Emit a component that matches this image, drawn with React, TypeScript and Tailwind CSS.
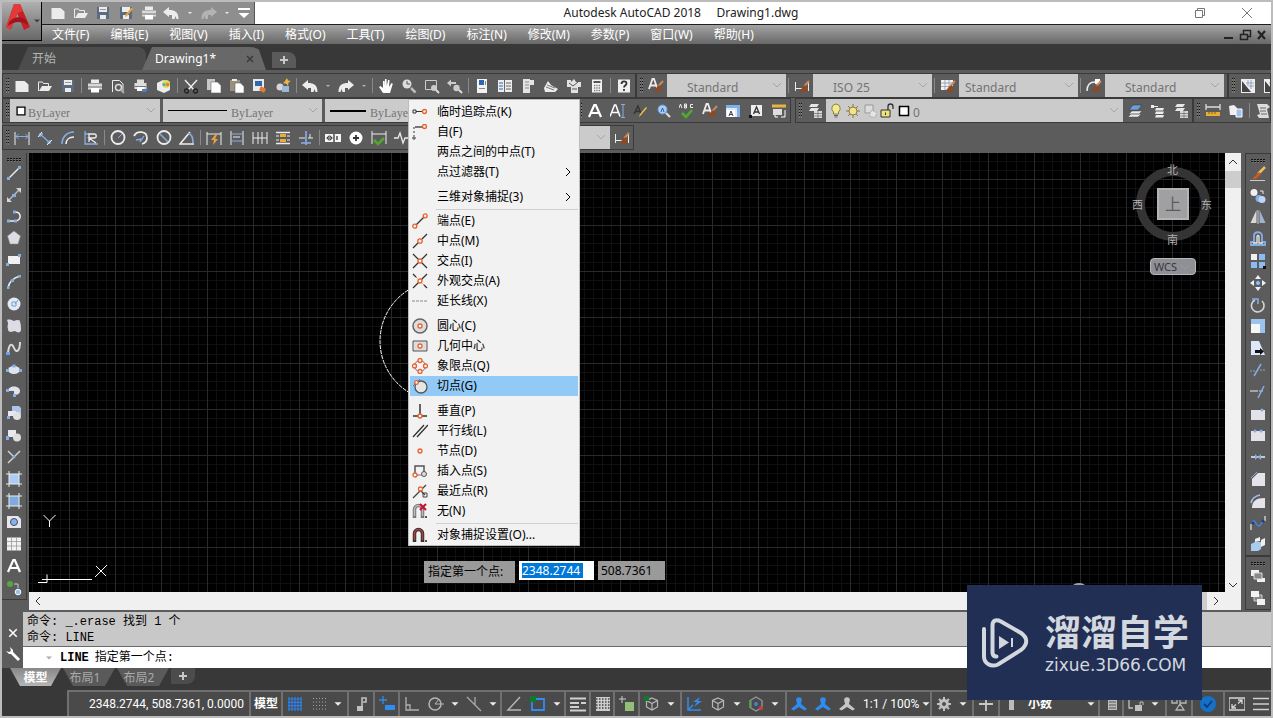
import type { ReactNode } from 'react';

const W = '#ececec';
const B = '#86aee6';
const O = '#e8622c';

const page = <path d="M1.500 3h9L14.500 6.500V14h-13z" fill={W} />;

const brush = (
  <>
    <path d="M15 3l-4.500 5" stroke="#c98a5a" strokeWidth="2" />
    <path d="M12 7.500c-3-.5-3.500 3-6 4.500 3 4 8 2 8-2z" fill="#8c4a26" />
  </>
);

const dimBar = <path d="M1.500 4v9M14.500 4v9M2 10.500h12" stroke={W} />;

const cube = <path d="M8 2l5.500 2.500v6.500L8 14l-5.500-3V4.500zM2.500 4.500L8 7.500l5.500-3M8 7.500V14" stroke="#b8b8b8" strokeWidth="1.200" />;

const person = (c: string) => (
  <>
    <path d="M8 2L5.500 5l.5 3L0 13l2.500 1.500L8 11l5.500 3.500L16 13l-6-5 .5-3z" fill={c} />
    <circle cx="8" cy="4" r="2.800" fill={c} />
  </>
);

const magnet = (c: string, inner: string) => (
  <>
    <path d="M2.500 15V6.500a4 4 0 0 1 8 0V15" stroke={c} strokeWidth="3.500" />
    <path d="M2.500 13V6.500a4 4 0 0 1 8 0V13" stroke={inner} strokeWidth="1.500" />
    <path d="M13 13h2v2h-2z" fill="#555" />
  </>
);

const icons: Record<string, ReactNode> = {
  new: page,
  open: (
    <>
      <path d="M1.500 13V4h4l1 1.500h5V8" stroke={W} />
      <path d="M2 13l3-5h10l-3 5z" fill={W} />
    </>
  ),
  save: (
    <>
      <path d="M2 2h12v12H2z" fill="#5c6b80" />
      <path d="M4 2h8v5H4zM5 10h6v4H5z" fill={W} />
      <path d="M5 4.500h6" stroke="#999" />
    </>
  ),
  saveAs: (
    <>
      <path d="M2 2h12v12H2z" fill="#5c6b80" />
      <path d="M4 2h8v5H4zM5 10h6v4H5z" fill={W} />
      <path d="M15 4l-6 7-2 1 .5-2.500 6-7z" fill="#e3a640" />
    </>
  ),
  print: (
    <>
      <path d="M4 1.500h8V5H4z" fill={W} />
      <path d="M1 5.500h14v6H1z" fill="#d8d8d8" />
      <path d="M1 9h14" stroke="#777" />
      <path d="M4 10h8v4.500H4z" fill="#fff" />
    </>
  ),
  undo: <path d="M0 7l6-5v3c6 0 9.500 2 9.500 9h-2l-1-3-1 3H9V10H6v2z" fill={W} />,
  redo: <path d="M16 7l-6-5v3C4 5 .5 7 .5 14h2l1-3 1 3H7v-4h3v2z" fill={W} />,
  down: <path d="M4 6h8l-4 4z" fill={W} />,
  downBar: <path d="M2 3h12v2H2zM2.500 8h11L8 13z" fill="#fff" />,
  preview: (
    <>
      <path d="M2.500 14V2.500h7L13 6v8" stroke={W} />
      <circle cx="8.500" cy="9.500" r="3" stroke="#ddd" strokeWidth="1.500" />
      <path d="M11 12l3 3" stroke="#aaa" strokeWidth="2" />
    </>
  ),
  publish: (
    <>
      <path d="M4 1.500h7V5H4zM1.500 5h12v6h-12z" fill="#ddd" />
      <path d="M4 9h7v4H4z" fill="#fff" />
      <path d="M2 8.500h11" stroke="#777" />
      <path d="M9 11h6l-2 3H9z" fill="#4a7fc4" />
    </>
  ),
  sheets: (
    <>
      <path d="M1 5l6-3 7 2v8l-6 3-7-3z" fill={W} />
      <circle cx="10" cy="6" r="4" fill="#d7e25c" />
      <circle cx="11.500" cy="6.500" r="2" fill="#e08a3c" />
      <circle cx="8" cy="6.500" r="1.500" fill="#5a9be0" />
    </>
  ),
  cut: (
    <>
      <path d="M2 2l9 10M14 2L5 12" stroke={W} strokeWidth="1.500" />
      <circle cx="3.500" cy="13" r="2" stroke="#222" strokeWidth="1.300" />
      <circle cx="12.500" cy="13" r="2" stroke="#222" strokeWidth="1.300" />
    </>
  ),
  copy: (
    <>
      <path d="M1 1h8v11H1z" fill="#c8c8c8" />
      <path d="M5 4h6.500L15 7.500V15H5z" fill="#fff" stroke="#666" strokeWidth=".6" />
    </>
  ),
  paste: (
    <>
      <path d="M1 2h10v11H1z" fill="#9a9080" />
      <path d="M3 1h5v2H3z" fill={W} />
      <path d="M6 5h5.500L15 8.500V15H6z" fill="#fff" stroke="#666" strokeWidth=".6" />
    </>
  ),
  match: (
    <>
      <path d="M1 1h11v12H1z" fill="#e9e9e9" />
      <path d="M3 3h7v5H3z" fill="#2f66b0" />
      <path d="M9 8l5 3-2 4-5-3z" fill="#e07b34" />
    </>
  ),
  blockEdit: (
    <>
      <circle cx="5" cy="9" r="3.500" fill="#d6d6d6" />
      <path d="M7 8h7v6H7z" fill="#9bb8d8" />
      <path d="M12 0l1 2.500 3 .5-2.500 1.500L13 8l-2-2.500H8L10 3z" fill="#f0b548" />
    </>
  ),
  pan: <path d="M5 15L1 9l1.500-1L5 10V3h1.500v5l.5-7h1.500l.3 7L10 2h1.500L11 9l2.500-4 1.300.7L12 15z" fill="#fff" />,
  zoom: (
    <>
      <circle cx="6" cy="6" r="4.500" fill="#ddd" />
      <path d="M6 3v3h3" stroke="#555" />
      <path d="M10 10l4.500 4.500" stroke="#bbb" strokeWidth="2.500" />
    </>
  ),
  zoomWin: (
    <>
      <path d="M1.500 2.500h11v9h-11z" stroke="#ccc" />
      <circle cx="10" cy="10" r="3" fill="#ccc" />
      <path d="M12 12l3 3" stroke="#ddd" strokeWidth="2" />
    </>
  ),
  zoomPrev: (
    <>
      <path d="M0 5l4-3.500V4h5v2H4v2.500z" fill="#ccc" />
      <circle cx="9.500" cy="10" r="3.200" fill="#ccc" />
      <path d="M12 12l3 3" stroke="#ddd" strokeWidth="2" />
    </>
  ),
  props: (
    <>
      <path d="M3 1h10v14H3z" fill="#f2f2f2" />
      <path d="M5 2h5v5H5z" fill="#2f66b0" />
      <path d="M11 3h1v4h-1zM5 10h6v1H5z" fill="#888" />
    </>
  ),
  center: (
    <>
      <path d="M1 2h14v12H1z" fill="#ededed" />
      <path d="M2 4h4v2H2zM2 7h4v2H2zM2 10h4v2H2z" fill="#8aa9cf" />
      <path d="M7.500 2v12M9 5h5M9 8h5M9 11h5" stroke="#666" />
    </>
  ),
  palette: (
    <>
      <path d="M3 1h7v14H3zM10 2h4v5h-4z" fill="#e4e4e4" />
      <path d="M5 4h4M5 7h4M5 10h4" stroke="#888" />
    </>
  ),
  sheetSet: (
    <>
      <path d="M1 10l4-7 3 4 7 4-3 3H2z" fill={W} />
      <path d="M3 9l8 3M4 7l8 3" stroke="#777" />
    </>
  ),
  markup: (
    <>
      <path d="M1 2h4v2l3-3 2 3h5v5h-3v6H5V9H1z" fill="#e2e2e2" />
      <path d="M3 5l4 3 5-4M6 11h5" stroke="#555" />
    </>
  ),
  calc: (
    <>
      <path d="M3 1.500h10v13H3z" fill="#f2f2f2" />
      <path d="M4.500 3h7v2h-7z" fill="#555" />
      <path d="M5 7.500h6.500M5 10h6.500M5 12.500h6.500" stroke="#777" strokeWidth="1.300" strokeDasharray="1.300 1" />
    </>
  ),
  help: (
    <>
      <path d="M2 1.500h12v13H2z" fill="#f0f0f0" />
      <path d="M5.500 6c0-3.500 5-3.500 5-.5 0 2-2.500 2-2.500 4M8 11v2" stroke="#333" strokeWidth="1.800" />
    </>
  ),
  textStyle: (
    <>
      <path d="M1 11L4.500 1h1.500L9.500 11M2.500 7.500h5.500" stroke={W} strokeWidth="1.800" />
      {brush}
    </>
  ),
  dimStyle: (
    <>
      {dimBar}
      {brush}
    </>
  ),
  tableStyle: (
    <>
      <path d="M1 2h12v10H1z" fill="#f2f2f2" />
      <path d="M1 5h12M1 8.500h12M5 2v10M9 2v10" stroke="#8a9bb5" strokeWidth=".8" />
      {brush}
    </>
  ),
  leaderStyle: (
    <>
      <path d="M1 13c0-5 2-9 8-9" stroke={W} strokeWidth="1.500" />
      <path d="M9 1h5v5H9z" fill="#fff" />
      {brush}
    </>
  ),
  ruler: (
    <>
      <path d="M1 1h14v14H1z" fill="#eee" />
      <path d="M2 3v11h9z" fill="#444" />
      <path d="M8 2v6M11 2v9M6 5h8M9 8h5" stroke="#7a95bb" strokeWidth=".8" />
    </>
  ),
  letterA: <path d="M2 14L7.300 2h1.500L14 14M4.500 10h7" stroke="#fff" strokeWidth="2.200" />,
  mtext: (
    <>
      <path d="M0 13.500L4.500 2h1.300L10 13.500M2 9.500h6" stroke="#fff" strokeWidth="1.500" />
      <path d="M11 1.500h4M13 1.500v13M11 14.500h4" stroke={B} />
    </>
  ),
  editText: (
    <>
      <path d="M1 11L5 3l3 8M3 8.500h4" stroke="#333" strokeWidth="1.500" />
      <path d="M14 5l-6 7-2 2 1-3 6-7z" fill="#f0c84a" />
    </>
  ),
  findText: (
    <>
      <circle cx="6.500" cy="6.500" r="4.500" fill="#a9cdf5" stroke="#6d9ddb" />
      <path d="M5 9l1.500-4L8 9" stroke="#2c5ea8" />
      <path d="M10 10l4 4" stroke="#ddd" strokeWidth="2.200" />
    </>
  ),
  spell: (
    <>
      <path d="M0 5l1.500-4L3 5M5.500 1v4h2V3H6h1.500V1zM14 1.500h-2.500v3H14" stroke={W} />
      <path d="M3 10l4 4 6-7" stroke="#4cae2c" strokeWidth="2.500" />
    </>
  ),
  scaleText: (
    <>
      <path d="M1 2h14v12H1z" fill="#dcebfb" />
      <path d="M1 2h14v12h-3V5H1z" fill="#7fb0ea" />
      <path d="M2 7h8v7H2z" fill="#fff" />
      <path d="M4 13l2-5 2 5M4.500 11.500h3" stroke="#444" />
    </>
  ),
  justify: (
    <>
      <path d="M3 2h11v11H3z" fill="#eee" />
      <path d="M5.500 11l3-7 3 7M6.500 9h4" stroke="#333" strokeWidth="1.300" />
      <path d="M1 12h3v3H1z" fill="#111" />
    </>
  ),
  convert: (
    <>
      <path d="M1 1.500h14v3H1z" fill="#e8b53a" />
      <path d="M2 6h9v6H2z" fill="#ddd" />
      <path d="M4 12v2h3M14 7v7h-4" stroke="#fff" />
    </>
  ),
  layers: (
    <>
      <path d="M4 1h8l-2 3H2zM4 5h8l-2 3H2z" fill="#e6e6e6" />
      <path d="M7 8h8v7H7z" fill="#dadada" />
      <path d="M7 10.500h8M7 13h8M11 8v7" stroke="#666" strokeWidth=".7" />
    </>
  ),
  layerBlue: (
    <>
      <path d="M5 8h10l-3 3H2zM4 11h10l-3 3H1z" fill={W} stroke="#555" strokeWidth=".5" />
      <path d="M6 2h9l-4 5H2z" fill="#6c9fe0" stroke="#333" strokeWidth=".5" />
    </>
  ),
  layerStack: <path d="M6 5h8l-1 2.500H5zM6 8.500h8l-1 2.500H5zM6 12h8l-1 2.500H5zM1 2h3v3H1zM4 3h4v1H4z" fill={W} />,
  measure: (
    <>
      <path d="M1 1v6M15 1v6M1 4h14" stroke="#ddd" strokeWidth="1.300" />
      <path d="M1 9h14v4H1z" fill="#e9ae35" />
      <path d="M4 9v2M7 9v2M10 9v2" stroke="#805b12" />
    </>
  ),
  groupTool: (
    <>
      <path d="M1 3l5-1 3 3v7H2z" fill="#f0f0f0" />
      <path d="M8 6h6v8H8z" fill="#9cc2ee" stroke="#fff" />
    </>
  ),
  script: (
    <>
      <path d="M2 1h10l3 3-3 2 2 9H4L2 12l3-1z" fill="#ddd" />
      <path d="M5 5h6M5 8h6M6 11h6" stroke="#667" />
    </>
  ),
  bulb: (
    <>
      <path d="M8 1a4.500 4.500 0 0 0-2.500 8v2h5V9A4.500 4.500 0 0 0 8 1z" fill="#f7e98a" stroke="#6b6b3a" strokeWidth=".8" />
      <path d="M6 12.500h4M6.500 14h3" stroke="#666" />
    </>
  ),
  sun: (
    <>
      <path d="M8 1v14M1 8h14M3 3l10 10M13 3L3 13" stroke="#8a7a3c" />
      <circle cx="8" cy="8" r="4" fill="#f5e38a" stroke="#6b6b3a" strokeWidth=".8" />
    </>
  ),
  freeze: (
    <>
      <path d="M3 2h8v8H3z" fill="#ddd" stroke="#999" />
      <path d="M8 8h6v6H8z" fill="#e5e5e5" stroke="#aaa" strokeDasharray="2 1" />
    </>
  ),
  unlock: (
    <>
      <path d="M2 7h9v7H2z" fill="#efe27c" stroke="#333" />
      <path d="M9 7V3.500a2.500 2.500 0 0 1 5 0V6" stroke="#333" strokeWidth="1.300" />
      <path d="M6.500 9.500v2.500" stroke="#333" />
    </>
  ),
  swatch: <path d="M3.500 3.500h9v9h-9z" fill="#fff" stroke="#000" strokeWidth="1.500" />,
  dimLinear: (
    <>
      <path d="M1 2v13M15 2v13" stroke={W} />
      <path d="M2 6.500h12M4.500 4L2 6.500 4.500 9M11.500 4L14 6.500 11.500 9" stroke={B} />
    </>
  ),
  dimAligned: (
    <>
      <path d="M3 4l10 9M3 7V4h3M13 10v3h-3" stroke={B} strokeWidth="1.300" />
      <path d="M1 7l4-5M10 15l5-5" stroke={W} />
    </>
  ),
  dimArc: (
    <>
      <path d="M2 14C2 7 7 2 14 2" stroke={B} strokeWidth="1.600" />
      <path d="M6 14c0-4 3-7 8-7" stroke={W} strokeWidth="1.600" />
    </>
  ),
  dimOrd: (
    <>
      <path d="M2 1v13h13M2 4h4" stroke={B} strokeWidth="1.300" />
      <path d="M6 12V4h5c3 0 3 4 0 4H6l7 5" stroke={W} strokeWidth="1.300" />
    </>
  ),
  dimRadius: (
    <>
      <circle cx="8" cy="7.500" r="6.500" stroke={W} strokeWidth="1.800" />
      <path d="M8 8l4-4" stroke={B} />
    </>
  ),
  dimJog: (
    <>
      <path d="M1 6c3-6 13-5 13 2 0 3-2 5-5 6" stroke={W} strokeWidth="1.800" />
      <path d="M3 10l5-1-1 3 4-6" stroke={B} strokeWidth="1.300" />
    </>
  ),
  dimDia: (
    <>
      <circle cx="8" cy="7.500" r="6.500" stroke={W} strokeWidth="1.800" />
      <path d="M4 4l8 8" stroke={B} strokeWidth="1.500" />
    </>
  ),
  dimAngle: (
    <>
      <path d="M11 2L1 14h14" stroke={W} strokeWidth="1.600" />
      <path d="M9 3c4 1 5 5 5 10" stroke={B} strokeWidth="1.600" />
    </>
  ),
  quickDim: (
    <>
      <path d="M1 2v13M15 2v13M1 4h14" stroke={W} />
      <path d="M9 5l-4 5h3l-1 5 5-6H9l2-4z" fill="#f0a03c" />
    </>
  ),
  baseline: (
    <>
      <path d="M2 1v14M14 1v14" stroke={W} />
      <path d="M2 4h12M2 11h12" stroke={B} />
      <path d="M4 7h7" stroke={W} />
    </>
  ),
  contDim: <path d="M1 2v12M6 2v12M10 2v12M15 2v12M1 8h14" stroke={W} />,
  dimSpace: (
    <>
      <path d="M1 2.500h14M1 13.500h14" stroke={W} strokeWidth="1.500" />
      <path d="M5 4h6v3H5zM5 9h6v3H5z" fill="#e9ae35" />
      <path d="M1 6h3M12 6h3M1 10h3M12 10h3" stroke={W} />
    </>
  ),
  dimBreak: (
    <>
      <path d="M1 8h6M10 8h5M12 4v4" stroke={W} />
      <path d="M8 1v14M3 13h10" stroke={B} strokeWidth="1.600" />
    </>
  ),
  tolerance: (
    <>
      <path d="M0 4h16v8H0z" fill="#f5f5f5" />
      <path d="M9 4v8M12 6v4" stroke="#333" strokeWidth="1.300" />
      <circle cx="4.500" cy="8" r="2" stroke="#333" />
      <path d="M1.500 8h6" stroke="#333" />
    </>
  ),
  centerMark: (
    <>
      <circle cx="8" cy="8" r="6.500" fill="#fff" />
      <path d="M8 5v6M5 8h6" stroke="#333" strokeWidth="1.800" />
    </>
  ),
  inspect: (
    <>
      <path d="M1 1v13M15 1v13M1 4h14" stroke={W} />
      <path d="M3 10l4 4 6-6" stroke="#53a82f" strokeWidth="2.500" />
    </>
  ),
  jogged: <path d="M0 8h4l2-5 3 10 2-5h4" stroke={W} strokeWidth="1.300" />,

  line: (
    <>
      <path d="M2.500 13.500l11-11" stroke={W} strokeWidth="1.500" />
      <path d="M1 12h3v3H1zM12 1h3v3h-3z" fill={B} />
    </>
  ),
  xline: (
    <>
      <path d="M3 13L13 3" stroke="#bbb" strokeWidth="1.500" />
      <path d="M10 1h5v5zM1 10v5h5z" fill="#d5d5d5" />
      <path d="M6 7h4v3H6z" fill={B} />
    </>
  ),
  pline: (
    <>
      <path d="M8 3c8-1 8 9 1 9H3" stroke={W} strokeWidth="1.600" />
      <path d="M7 1.500h3v3H7zM1 10.500h3v3H1zM8 10.500h3v3H8z" fill={B} />
    </>
  ),
  polygon: <path d="M8 1l6.500 5L12 14H4L1.500 6z" fill="#dcdce4" stroke="#888" strokeWidth=".5" />,
  rect: (
    <>
      <path d="M2 4h12v8H2z" fill="#f0f0f0" />
      <path d="M0 11h3v3H0zM12 2h3v3h-3z" fill={B} />
    </>
  ),
  arc: (
    <>
      <path d="M2 14C3 8 7 4 14 2" stroke={W} strokeWidth="1.500" />
      <path d="M1 12h2.500v3H1zM5 5h3v3H5zM12 1h3v2.500h-3z" fill={B} />
    </>
  ),
  circle: (
    <>
      <circle cx="8" cy="8" r="6.500" fill="#e4eaf0" />
      <path d="M6 6h4v4H6zM9 8l3-4" stroke="#6da0d8" />
    </>
  ),
  cloud: <path d="M1 2c2-1 5 0 7 1 3-2 7-1 6 1 1 2 1 6 1 8 0 3-4 3-6 1-3 1-7 2-7-2-1-2 0-4 0-6z" fill="#dcdce4" />,
  spline: (
    <>
      <path d="M2 13C3 3 6 3 8 8s6 4 6-6" stroke="#d8d8d8" strokeWidth="2" />
      <path d="M0 12h4v3H0z" fill="#6d9ff0" />
    </>
  ),
  ellipse: (
    <>
      <ellipse cx="8" cy="8" rx="6" ry="4" fill="#dfe4ec" />
      <path d="M0 7h3v3H0zM13 7h3v3h-3zM6.500 2.500h3v3h-3z" fill={B} />
    </>
  ),
  ellipseArc: (
    <>
      <path d="M2 8c0-6 12-6 12 0 0 3-3 4-6 4V8z" fill="#dfe4ec" />
      <path d="M0 6h3v3H0zM7 11h3v3H7z" fill={B} />
    </>
  ),
  insert: (
    <>
      <path d="M6 1h7l2 2v6H6z" fill="#a9c6e8" />
      <path d="M2 6h8v5H2z" fill="#e8e8ee" />
      <circle cx="11" cy="11" r="4" fill="#e0e0e6" />
      <path d="M1 11h3v3H1z" fill={B} />
    </>
  ),
  block: (
    <>
      <path d="M2 3h8v7H2z" fill="#e8e8ee" />
      <circle cx="11" cy="10.500" r="4" fill="#dcdce2" />
      <path d="M0 9h3v4H0z" fill={B} />
    </>
  ),
  point: (
    <>
      <path d="M2 2l6 6 6-6M8 8l-6 6" stroke="#cfcfcf" strokeWidth="1.500" />
      <circle cx="8" cy="8" r="1.500" fill={B} />
    </>
  ),
  hatch: (
    <>
      <path d="M3 3h10v10H3z" fill="#a9cdf5" />
      <path d="M3 0v16M13 0v16M0 3h16M0 13h16" stroke={W} />
    </>
  ),
  gradient: (
    <>
      <path d="M3 3h10v10H3z" fill="#7fa9df" />
      <path d="M3 0v16M13 0v16M0 3h16M0 13h16" stroke={W} />
    </>
  ),
  region: (
    <>
      <path d="M1 2h11l3 3v9H1z" fill="#e6e6ec" />
      <circle cx="8" cy="8" r="3.500" fill="#8ab2e6" stroke="#3d4d66" />
    </>
  ),
  table: (
    <>
      <path d="M1 1.500h14v13H1z" fill="#f2f2f2" />
      <path d="M1 5.500h14M1 10h14M5.500 2v13M10.500 2v13" stroke="#999" strokeWidth=".8" />
    </>
  ),
  addSel: (
    <>
      <circle cx="4" cy="4" r="3" fill="#56a83a" />
      <path d="M8 4h4v4" stroke="#ccc" />
      <circle cx="12" cy="12" r="2.800" fill="#8fc0f5" stroke="#fff" />
    </>
  ),

  erase: (
    <>
      <path d="M15 1L8 8" stroke="#f0c060" strokeWidth="2.500" />
      <path d="M9 6l2 2-5 5H2z" fill="#d2571f" />
      <path d="M0 14.500h15" stroke="#ccc" />
    </>
  ),
  copyObj: (
    <>
      <circle cx="4" cy="4.500" r="3.500" fill="#f0f0f0" />
      <circle cx="9" cy="10.500" r="3.500" fill="#7fb0ea" />
      <circle cx="12" cy="11.500" r="3.500" fill="#bdd6f5" />
      <path d="M10 3h3v3" stroke="#eee" />
    </>
  ),
  mirror: (
    <>
      <path d="M6.500 1v13H.5z" fill="#d8d8d8" />
      <path d="M9.500 1v13h6z" fill="#9db4cf" />
      <path d="M8 1v14" stroke="#fff" strokeWidth=".7" />
    </>
  ),
  offset: (
    <>
      <path d="M1 14h14v-3h-3V5c0-5-8-5-8 0v6H1z" stroke={B} strokeWidth="1.800" />
      <path d="M3 12h4V6c0-2 2-2 2 0v6h4" stroke={W} strokeWidth="1.300" />
    </>
  ),
  array: (
    <>
      <path d="M1 1h6v6H1z" fill="#f0f0f0" />
      <path d="M9 1h6v6H9zM1 9h6v6H1zM9 9h6v6H9z" fill="#8dbaf0" />
      <path d="M13 13h3v3h-3z" fill="#111" />
    </>
  ),
  move: (
    <>
      <path d="M8 0l3 4H5zM8 16l3-4H5zM0 8l4-3v6zM16 8l-4-3v6z" fill="#f0f0f0" />
      <circle cx="8" cy="8" r="2.500" fill="#9cc0ee" stroke="#3d5d8a" />
    </>
  ),
  rotate: (
    <>
      <path d="M5 3a6.300 6.300 0 1 0 7 1" stroke="#d5d5d5" strokeWidth="1.600" />
      <path d="M2 2h6v5" stroke={B} strokeWidth="1.500" />
    </>
  ),
  scale: (
    <>
      <path d="M1 1h14v14H1z" fill="#9cc2ee" />
      <path d="M1 6h9v9H1z" fill="#f5f5f5" />
    </>
  ),
  stretch: (
    <>
      <path d="M1 1h8l6 14H1z" fill="#dbe9fa" />
      <path d="M5 10h5V8l4 3.500L10 15v-2H5z" fill="#111" />
    </>
  ),
  trim: (
    <>
      <path d="M0 9h5M10 8h6" stroke="#8aa" strokeDasharray="2 1" />
      <path d="M4 14l7-12" stroke={B} strokeWidth="1.500" />
    </>
  ),
  extend: (
    <>
      <path d="M0 7h8" stroke={W} />
      <path d="M9 7h4M8 14l6-12" stroke={B} strokeWidth="1.500" />
    </>
  ),
  breakPt: (
    <>
      <path d="M1 4h14v10H1z" fill="#e2e2e8" />
      <circle cx="12" cy="4" r="1.500" fill={B} />
    </>
  ),
  breakObj: (
    <>
      <path d="M1 4h14v10H1z" fill="#e2e2e8" />
      <circle cx="5" cy="4" r="1.500" fill={B} />
      <circle cx="11" cy="4" r="1.500" fill={B} />
    </>
  ),
  join: (
    <>
      <path d="M1 8h14" stroke={W} strokeWidth="1.500" />
      <path d="M5 5l3 3-3 3zM11 5L8 8l3 3z" fill={B} />
    </>
  ),
  chamfer: (
    <>
      <path d="M2 15V8l6-6h7v13z" fill="#e4e4ea" />
      <path d="M1 7l6-6" stroke={B} />
    </>
  ),
  fillet: (
    <>
      <path d="M2 15c0-7 4-10 13-10v10z" fill="#e4e4ea" />
      <path d="M1 10c1-5 4-7 9-8" stroke="#9cc0ee" strokeWidth="1.500" />
    </>
  ),
  blend: (
    <>
      <path d="M1 15V9M15 1v5" stroke="#ccb" strokeWidth="1.500" />
      <path d="M2 8c3-6 4 4 7 3s2-5 5-5" stroke="#4a84e0" strokeWidth="1.500" />
      <circle cx="3" cy="8" r="1.500" fill="#1d3f86" />
      <circle cx="13" cy="6" r="1.500" fill="#1d3f86" />
    </>
  ),
  explode: (
    <>
      <path d="M5 3l5-2v4l-5 1zM11 4l4-2v7l-4 2z" fill="#f0f0f0" />
      <path d="M1 8l4-2h6v7l-3 2H1z" fill="#a9cdf0" />
    </>
  ),
  front: (
    <>
      <path d="M1 2h8v6H1zM7 10h8v4H7z" fill="#f2f2f2" />
      <path d="M4 5h8v6H4z" fill="#888" stroke="#ddd" />
    </>
  ),
  back: (
    <>
      <path d="M4 5h8v6H4z" fill="#888" stroke="#ccc" />
      <path d="M1 1h8v6H1zM7 9h8v6H7z" fill="#f2f2f2" />
    </>
  ),

  track: (
    <>
      <path d="M1 6h3v3H1zM4 7.500h7" stroke="#333" />
      <circle cx="12.500" cy="7.500" r="2" stroke={O} strokeWidth="1.300" />
    </>
  ),
  from: (
    <>
      <path d="M3 3h8" stroke="#333" strokeWidth="1.300" />
      <path d="M2 3v9" stroke="#333" strokeDasharray="2 2" />
      <circle cx="2" cy="14" r="1.200" stroke="#333" />
      <circle cx="12.500" cy="2.500" r="2" stroke={O} strokeWidth="1.300" />
    </>
  ),
  endpoint: (
    <>
      <path d="M4 12l8-8" stroke="#333" strokeWidth="1.300" />
      <circle cx="2.800" cy="13.200" r="2" stroke={O} strokeWidth="1.300" />
      <circle cx="13.200" cy="2.800" r="2" stroke={O} strokeWidth="1.300" />
    </>
  ),
  midpoint: (
    <>
      <path d="M1 15l5-5M10 6l5-5" stroke="#333" strokeWidth="1.300" />
      <circle cx="8" cy="8" r="2.200" stroke={O} strokeWidth="1.300" />
    </>
  ),
  intersect: (
    <>
      <path d="M1 1l14 14M15 1L1 15" stroke="#333" strokeWidth="1.300" />
      <circle cx="8" cy="8" r="2" fill="#fff" stroke={O} strokeWidth="1.300" />
    </>
  ),
  apparent: (
    <>
      <path d="M1 1l3 3M12 12l3 3M15 1L1 15" stroke="#333" strokeWidth="1.300" />
      <path d="M4 4l8 8" stroke={O} strokeDasharray="1.500 1" />
      <circle cx="8" cy="8" r="2" fill="#fff" stroke={O} strokeWidth="1.300" />
    </>
  ),
  extension: <path d="M0 8h16" stroke="#888" strokeDasharray="3 1" />,
  centerPt: (
    <>
      <circle cx="8" cy="8" r="7" fill="#ddd" stroke="#666" strokeWidth="1.500" />
      <circle cx="8" cy="8" r="2" fill="#fff" stroke={O} strokeWidth="1.300" />
    </>
  ),
  geoCenter: (
    <>
      <path d="M1 3h14v10H1z" fill="#ddd" stroke="#555" />
      <circle cx="8" cy="8" r="2" fill="#fff" stroke={O} strokeWidth="1.300" />
    </>
  ),
  quadrant: (
    <>
      <circle cx="8" cy="8" r="5.500" stroke="#777" />
      <g stroke={O} strokeWidth="1.300" fill="#f2f2f2">
        <circle cx="8" cy="2.500" r="2" />
        <circle cx="8" cy="13.500" r="2" />
        <circle cx="2.500" cy="8" r="2" />
        <circle cx="13.500" cy="8" r="2" />
      </g>
    </>
  ),
  tangent: (
    <>
      <circle cx="9" cy="9" r="6" fill="#e5e5e5" stroke="#555" strokeWidth="1.300" />
      <path d="M1 8l7-7" stroke="#777" />
      <circle cx="4.500" cy="4.500" r="1.800" fill="#fff" stroke={O} strokeWidth="1.300" />
    </>
  ),
  perp: (
    <>
      <path d="M8 1v10M1 13h5M10 13h5" stroke="#333" strokeWidth="1.500" />
      <circle cx="8" cy="13" r="2" stroke={O} strokeWidth="1.300" />
    </>
  ),
  parallel: <path d="M1 14L12 2M5 14L16 2" stroke="#333" strokeWidth="1.300" />,
  node: <circle cx="8" cy="8" r="2" stroke={O} strokeWidth="1.300" />,
  insertPt: (
    <>
      <path d="M3 10V3h9v6" stroke="#555" strokeWidth="1.500" />
      <circle cx="12" cy="11" r="2.500" fill="#ddd" stroke="#555" />
      <circle cx="3" cy="12" r="2" fill="#fff" stroke={O} strokeWidth="1.300" />
      <path d="M5 12h5" stroke="#777" />
    </>
  ),
  nearest: (
    <>
      <path d="M1 15L14 2M9 8l4 4" stroke="#444" strokeWidth="1.300" />
      <path d="M11 10h4v4h-4z" stroke="#444" />
      <circle cx="8.500" cy="6" r="2" fill="#fff" stroke={O} strokeWidth="1.300" />
    </>
  ),
  none: (
    <>
      {magnet('#777', '#bbb')}
      <path d="M8 1l6 6M14 1L8 7" stroke="#c8102e" strokeWidth="2" />
    </>
  ),
  osettings: magnet('#333', '#b04040'),

  gridOn: (
    <path d="M2 1v14M5 1v14M8 1v14M11 1v14M14 1v14M1 3h14M1 6.300h14M1 9.600h14M1 13h14" stroke="#2f7fe6" strokeWidth="1.200" />
  ),
  snapDots: <path d="M2 2.500h13M2 6h13M2 9.500h13M2 13h13" stroke="#a5a5a5" strokeDasharray="1 2" />,
  infer: (
    <>
      <path d="M9 12V2h4v4h-3" stroke="#c0c0c0" strokeWidth="1.600" />
      <path d="M4 10h6v5H4z" fill="#c0c0c0" />
    </>
  ),
  dynIn: (
    <>
      <path d="M0 4h8M4 0v8" stroke="#2f8cf0" strokeWidth="1.300" />
      <path d="M6 9h10v5H6z" fill="#2f8cf0" />
    </>
  ),
  ortho: <path d="M2 1v13h13M2 9h4v5" stroke="#b0b0b0" strokeWidth="1.300" />,
  polar: (
    <>
      <circle cx="7" cy="8" r="6" stroke="#b5b5b5" strokeWidth="1.500" />
      <path d="M7 8h9M7 8l4-5" stroke="#b5b5b5" />
    </>
  ),
  iso: <path d="M1 1l14 14M9 1v8" stroke="#aaa" strokeWidth="1.300" />,
  otrack: <path d="M14 1L2 14h13" stroke="#b5b5b5" strokeWidth="1.500" />,
  osnap: (
    <>
      <path d="M2 3h12v11H2z" stroke="#2f8cf0" strokeWidth="1.800" />
      <path d="M0 0h6v6H0z" fill="#0f7a2a" />
    </>
  ),
  lwt: <path d="M0 2.500h16M0 7h9M11 7h5M0 11h9M0 14.500h16" stroke="#d0d0d0" strokeWidth="2" />,
  trans: (
    <>
      <path d="M1 1h14v14H1z" fill="#ccc" />
      <path d="M1 3h14M1 6h14M1 9h14M1 12h14" stroke="#444" strokeWidth="1.300" strokeDasharray="1.500 1.500" />
    </>
  ),
  cycling: (
    <>
      <path d="M6 6h9v9H6z" fill="#93bf7a" />
      <path d="M3 0v7M0 3h7" stroke="#ccc" />
    </>
  ),
  osnap3d: (
    <>
      {cube}
      <path d="M0 0h5v5H0z" fill="#0f7a2a" />
    </>
  ),
  ducs: (
    <>
      <path d="M2 1v13h13M2 14l5-5" stroke="#2f8cf0" strokeWidth="1.500" />
      <path d="M14 1L7 6h4l-3 5 8-6h-4z" fill="#2f8cf0" />
    </>
  ),
  filter: cube,
  gizmo: (
    <>
      <path d="M8 1l6 3.500v7L8 15l-6-3.500v-7zM8 6v4" stroke="#999" strokeWidth="1.300" />
      <path d="M3 4.500v7" stroke="#46a546" strokeWidth="1.500" />
      <circle cx="13" cy="12" r="2" fill="#d43a3a" />
      <circle cx="8" cy="8" r="2" fill="#3f7fd8" />
    </>
  ),
  annoOn: person('#2f8cf0'),
  annoOff: person('#c5c5c5'),
  gear: (
    <>
      <circle cx="8" cy="8" r="5" fill="#c0c0c0" />
      <path d="M8 1v14M1 8h14M3 3l10 10M13 3L3 13" stroke="#c0c0c0" strokeWidth="2" />
      <circle cx="8" cy="8" r="2" fill="#4d4d4d" />
    </>
  ),
  plus: <path d="M8 1v14M1 8h14" stroke="#c8c8c8" strokeWidth="1.800" />,
  newTab: <path d="M8 0v16M0 8h16" stroke="#c8c8c8" strokeWidth="4" />,
  units: <path d="M5 0h5v14H5z" fill="#bbb" />,
  quickProp: (
    <>
      <path d="M4 2h9v12H4z" fill="#bbb" />
      <path d="M5 6h7M5 9h7M5 12h7" stroke="#555" />
    </>
  ),
  lockUi: (
    <>
      <path d="M5 12H1V3h8" stroke="#c0c0c0" strokeWidth="1.300" />
      <path d="M7 9h7v6H7z" fill="#c0c0c0" />
      <path d="M12 9V6h3v3" stroke="#c0c0c0" />
    </>
  ),
  isolate: <path d="M1 2h5v5H1zM9 2h6v5H9zM5 14l4-6 4 6z" stroke="#b5b5b5" strokeWidth="1.300" />,
  hardware: (
    <>
      <circle cx="8" cy="8" r="8" fill="#1570c9" />
      <path d="M4 8l3 3 5-6" stroke="#0c3f78" strokeWidth="1.800" />
    </>
  ),
  clean: <path d="M0 2h16v12H0zM9 4h4v4M13 4L9 7.500M7 12H3V8M3 12l4-3.500" stroke="#d5d5d5" strokeWidth="1.300" />,
  custom: <path d="M0 2.500h16M0 8h16M0 13.500h16" stroke="#d0d0d0" strokeWidth="1.600" />,
  close: <path d="M2 2l12 12M14 2L2 14" stroke="#fff" strokeWidth="2.400" />,
  wrench: (
    <>
      <path d="M6 6l8 8" stroke="#fff" strokeWidth="3" />
      <path d="M1 5l3 3h4V4L5 1l1 4-2 1z" fill="#fff" />
    </>
  ),
};

function Icon({ name, className = 'size-4' }: { name: string; className?: string }) {
  return (
    <svg viewBox="0 0 16 16" fill="none" className={`${className} shrink-0`} aria-hidden="true">
      {icons[name]}
    </svg>
  );
}

function Tool({ name, className = 'w-[23px]' }: { name: string; className?: string }) {
  return (
    <button type="button" aria-label={name} className={`flex shrink-0 items-center justify-center ${className}`}>
      <Icon name={name} />
    </button>
  );
}

// names are icon keys, "|" is a divider and "v" a small drop-down arrow
function Tools({ list }: { list: string }) {
  return (
    <>
      {list.split(' ').map((name, i) => {
        if (name === '|') return <span key={i} className="my-1 mr-px ml-[2px] w-px shrink-0 bg-[#8a8a8a]" />;
        if (name === 'v') {
          return (
            <button key={i} type="button" aria-label="more" className="flex w-[13px] shrink-0 items-center justify-center opacity-60">
              <Icon name="down" className="size-2" />
            </button>
          );
        }
        return <Tool key={i} name={name} />;
      })}
    </>
  );
}

function Grip() {
  return (
    <span className="my-1 mr-px ml-[2px] w-1 shrink-0 bg-[conic-gradient(#111_25%,#7a7a7a_0_50%,#5c5c5c_0)] bg-[length:2px_3px]" />
  );
}

function GripRow() {
  return <span className="mx-1 mt-[5px] h-1 shrink-0 bg-[conic-gradient(#111_25%,#7a7a7a_0_50%,#5c5c5c_0)] bg-[length:3px_2px]" />;
}

function Chevron({ className = '' }: { className?: string }) {
  return (
    <svg viewBox="0 0 10 6" fill="none" className={`h-[6px] w-[10px] ${className}`} aria-hidden="true">
      <path d="M1 1l4 4 4-4" stroke="currentColor" />
    </svg>
  );
}

function Combo({ label, value, className, textClass }: { label: string; value: string; className: string; textClass: string }) {
  return (
    <div className={`relative shrink-0 bg-[#cbcbcb] ${className}`}>
      <select
        aria-label={label}
        className={`h-full w-full appearance-none bg-transparent pb-[2px] text-xs text-[#747474] outline-none ${textClass}`}
      >
        <option>{value}</option>
      </select>
      <Chevron className="pointer-events-none absolute top-2 right-1 text-[#a5a5a5]" />
    </div>
  );
}

const menus = ['文件(F)', '编辑(E)', '视图(V)', '插入(I)', '格式(O)', '工具(T)', '绘图(D)', '标注(N)', '修改(M)', '参数(P)', '窗口(W)', '帮助(H)'];

function Header() {
  return (
    <header className="flex shrink-0 bg-[#6a6a6a]">
      <button
        type="button"
        aria-label="application menu"
        className="flex h-[39px] w-10 shrink-0 items-center border-r border-b border-black bg-linear-to-b from-[#b0b0b0] to-[#686868] pl-[3px]"
      >
        <svg viewBox="0 0 26 28" className="mb-2 h-7 w-[26px] shrink-0" aria-hidden="true">
          <path d="M9 1h6l10 23-6 3-7-17-6 16-5-2z" fill="#c81f26" />
          <path d="M9 1h6l3 7-5 2-8 17-4-3z" fill="#e03a3a" />
          <path d="M4 19c6-6 12-6 18-1l1 4c-7-4-13-4-20 1z" fill="#a3141c" />
        </svg>
        <Icon name="down" className="size-3 invert-[0.8]" />
      </button>
      <div className="min-w-0 flex-1">
        <div className="flex h-[23px] border-b border-[#1e1e1e] bg-white">
          <div className="flex w-[213px] shrink-0 items-center justify-between border-r border-[#555] bg-[#8e8e8e] pr-1 pl-2">
            {['new', 'open', 'save', 'saveAs', 'print', 'undo'].map((n) => (
              <Tool key={n} name={n} className="w-4" />
            ))}
            <Icon name="down" className="size-2" />
            <span className="opacity-40">
              <Tool name="redo" className="w-4" />
            </span>
            <Icon name="down" className="size-2" />
            <Tool name="downBar" className="w-3" />
          </div>
          <h1 className="flex-1 pr-[86px] text-center text-xs leading-[22px] whitespace-pre text-[#222]">
            {'Autodesk AutoCAD 2018     Drawing1.dwg'}
          </h1>
          <div className="flex w-[78px] items-center gap-[33px] text-[#777]">
            <svg viewBox="0 0 14 14" fill="none" className="size-[14px]" aria-hidden="true">
              <path d="M2.500 4.500h7v7h-7zM4.500 4.500v-2h7v7h-2" stroke="currentColor" />
            </svg>
            <svg viewBox="0 0 14 14" fill="none" className="size-[14px]" aria-hidden="true">
              <path d="M2 2l10 10M12 2L2 12" stroke="currentColor" />
            </svg>
          </div>
        </div>
        <nav className="flex h-[19px] items-center gap-px bg-linear-to-b from-[#a4a4a4] to-[#686868]">
          {menus.map((m) => (
            <button key={m} type="button" className="px-[10px] text-xs leading-[18px] whitespace-nowrap text-white">
              {m}
            </button>
          ))}
          <svg viewBox="0 0 44 12" fill="none" className="mr-1 ml-auto h-3 w-11" aria-hidden="true">
            <path d="M1 9h9" stroke="#222" strokeWidth="2" />
            <path d="M17.500 5.500h7v5h-7zM20.500 5V1.500h7v6H25" stroke="#222" strokeWidth="1.500" />
            <path d="M35 2l7 8M42 2l-7 8" stroke="#222" strokeWidth="2.200" />
          </svg>
        </nav>
      </div>
    </header>
  );
}

function FileTabs() {
  return (
    <div className="flex h-[26px] shrink-0 items-end bg-[#383838] pl-4 text-xs">
      <button
        type="button"
        className="h-[23px] w-[128px] rounded-t-lg bg-[#4c4c4c] pl-[14px] text-left text-[#b5b5b5] [clip-path:polygon(10px_0,100%_0,100%_100%,0_100%)]"
      >
        开始
      </button>
      <button
        type="button"
        className="-ml-1 flex h-[23px] w-[124px] items-center rounded-tl-lg rounded-tr-2xl bg-[#686868] pl-[13px] text-left text-white [clip-path:polygon(10px_0,calc(100%-8px)_0,100%_100%,0_100%)]"
      >
        Drawing1*
        <svg viewBox="0 0 8 8" fill="none" className="mr-3 ml-auto size-2" aria-hidden="true">
          <path d="M1 1l6 6M7 1L1 7" stroke="#3a3a3a" strokeWidth="1.500" />
        </svg>
      </button>
      <button
        type="button"
        aria-label="new tab"
        className="mb-[2px] ml-[6px] flex h-4 w-6 items-center justify-center rounded-tr-lg bg-[#5a5a5a]"
      >
        <Icon name="newTab" className="size-2" />
      </button>
    </div>
  );
}

const bar = 'flex border border-[#3a3a3a]';
const serif = "font-['Liberation_Serif',serif]";

function Toolbars() {
  return (
    <div className="flex h-[83px] shrink-0 flex-col bg-[#5c5c5c] pt-[3px]">
      <div className="flex h-[25px] overflow-hidden">
        <div className={bar}>
          <Grip />
          <Tools list="new open save | print preview publish sheets | cut copy paste match blockEdit | undo v redo v | pan zoom zoomWin zoomPrev | props center palette sheetSet markup calc | help" />
        </div>
        <div className={`${bar} flex-1`}>
          <Grip />
          <Tools list="textStyle" />
          <Combo label="text style" value="Standard" className="w-[119px]" textClass="pl-5" />
          <Tools list="| dimStyle" />
          <Combo label="dimension style" value="ISO 25" className="w-[119px]" textClass="pl-5" />
          <Tools list="| tableStyle" />
          <Combo label="table style" value="Standard" className="w-[119px]" textClass="pl-[6px]" />
          <Tools list="| leaderStyle" />
          <Combo label="leader style" value="Standard" className="w-[119px]" textClass="pl-5" />
        </div>
        <div className={`${bar} w-[43px] shrink-0 overflow-hidden`}>
          <Grip />
          <Tools list="ruler ruler" />
        </div>
      </div>
      <div className="flex h-[25px] overflow-hidden">
        <div className={`${bar} w-[577px] shrink-0 gap-[3px]`}>
          <Grip />
          <label className="-ml-[3px] flex w-[150px] items-center bg-[#cbcbcb] pl-1">
            <Icon name="swatch" className="size-[14px]" />
            <Combo label="colour" value="ByLayer" className="h-full flex-1" textClass={serif} />
          </label>
          <label className="flex w-[159px] items-center bg-[#cbcbcb] pl-[5px]">
            <span className="h-px w-[59px] bg-black" />
            <Combo label="line type" value="ByLayer" className="h-full flex-1" textClass={`pl-1 ${serif}`} />
          </label>
          <label className="flex w-[158px] items-center bg-[#cbcbcb] pl-[5px]">
            <span className="h-[2px] w-9 bg-black" />
            <Combo label="line weight" value="ByLayer" className="h-full flex-1" textClass={`pl-1 ${serif}`} />
          </label>
        </div>
        <div className={`${bar} shrink-0`}>
          <span className="my-1 w-[3px] bg-[conic-gradient(#111_25%,#7a7a7a_0_50%,#5c5c5c_0)] bg-[length:2px_3px]" />
          <Tools list="letterA mtext editText findText spell textStyle scaleText justify convert" />
        </div>
        <div className={`${bar} ml-1 flex-1`}>
          <Grip />
          <Tools list="layers" />
          <div className="flex flex-1 items-center gap-px bg-[#cbcbcb] pl-[2px]">
            {['bulb', 'sun', 'freeze', 'unlock', 'swatch'].map((n) => (
              <Icon key={n} name={n} />
            ))}
            <Combo label="layer" value="0" className="h-full flex-1" textClass="" />
          </div>
          <Tools list="layerBlue layerStack layers" />
        </div>
        <div className={`${bar} w-[78px] shrink-0 overflow-hidden`}>
          <Grip />
          <Tools list="measure groupTool | script" />
        </div>
      </div>
      <div className="mt-[2px] flex h-[25px]">
        <div className={bar}>
          <Grip />
          <Tools list="dimLinear dimAligned dimArc dimOrd | dimRadius dimJog dimDia dimAngle | quickDim baseline contDim dimSpace dimBreak | tolerance centerMark inspect jogged" />
          <Combo label="current dimension style" value="" className="w-[197px]" textClass="" />
          <Tools list="dimStyle" />
        </div>
      </div>
    </div>
  );
}

const drawTools = 'line xline pline polygon rect arc circle cloud spline ellipse ellipseArc insert block point hatch gradient region table letterA addSel'.split(' ');
const modifyTools =
  'erase copyObj mirror offset array move rotate scale stretch trim extend breakPt breakObj join chamfer fillet blend explode'.split(' ');

const STEP = 9.19;

// model space grid: every fifth line is brighter
function Drawing() {
  const lines = Array.from({ length: 300 }, (_, i) => i);
  return (
    <svg className="absolute inset-0 size-full" fill="none" aria-hidden="true">
      <g shapeRendering="crispEdges">
        {lines.map((i) => (
          <path
            key={i}
            d={`M${Math.round(i * STEP - 6) + 0.5} 0v2000M0 ${Math.round(i * STEP - 20) + 0.5}h3000`}
            stroke="#101013"
          />
        ))}
        {lines.slice(0, 60).map((i) => (
          <path
            key={i}
            d={`M${Math.round(i * 5 * STEP - 6) + 0.5} 0v2000M0 ${Math.round(i * 5 * STEP - 20) + 0.5}h3000`}
            stroke="#28282d"
          />
        ))}
      </g>
      <circle cx="411" cy="188" r="60" stroke="#fff" strokeDasharray="4 1" />
      <path d="M14.500 362l6 6 6-6M20.500 368v6M13 426.500h50M9 429.500h9v-8M66 424l12-12M67 413l10 10" stroke="#fff" />
      <ellipse cx="1050" cy="434" rx="7" ry="4" fill="#9aa3ad" />
    </svg>
  );
}

function ViewCube() {
  return (
    <div className="absolute top-[11px] right-[13px] flex w-[78px] flex-col items-center text-[11px] leading-3 text-[#b0b0b0]">
      <div className="relative size-[78px]">
        <div className="absolute top-[3px] left-[2px] size-[74px] rounded-full border-[9px] border-[#343434]" />
        <button type="button" className="absolute top-6 left-[23px] size-8 border-2 border-[#b5b5b5] bg-[#a0a0a3] text-base text-[#5c5c60]">
          上
        </button>
        <span className="absolute top-0 left-[33px]">北</span>
        <span className="absolute top-[35px] -left-[2px]">西</span>
        <span className="absolute top-[35px] right-0">东</span>
        <span className="absolute top-[70px] left-[33px]">南</span>
      </div>
      <button
        type="button"
        className="mt-4 flex h-[17px] w-[46px] items-center gap-[3px] rounded-sm border border-[#b5b5bb] bg-[#8f8f96] pl-[3px] text-[#36363c]"
      >
        WCS
        <Chevron className="text-[#9a9aa0]" />
      </button>
    </div>
  );
}

function Workspace() {
  return (
    <main className="flex min-h-0 flex-1 bg-[#5c5c5c]">
      <div className="mb-3 flex w-[25px] shrink-0 flex-col border-r border-b border-[#3a3a3a]">
        <GripRow />
        {drawTools.map((n) => (
          <Tool key={n} name={n} className="min-h-0 w-[23px] flex-1" />
        ))}
      </div>
      <div className="ml-[2px] flex min-w-0 flex-1 flex-col">
        <div className="flex min-h-0 flex-1">
          <div className="relative min-w-0 flex-1 overflow-hidden bg-black">
            <Drawing />
            <ViewCube />
          </div>
          <div className="flex w-4 shrink-0 flex-col items-center bg-[#f0f0f0] text-[#333]">
            <Chevron className="my-[6px] shrink-0 rotate-180" />
            <div className="h-[17px] w-full bg-[#cdcdcd]" />
            <Chevron className="mt-auto mb-1" />
          </div>
        </div>
        <div className="mb-[2px] flex h-[18px] shrink-0 items-center justify-between bg-[#f0f0f0] text-[#333]">
          <Chevron className="ml-1 rotate-90" />
          <div className="ml-auto h-full w-[180px] bg-[#cdcdcd]" />
          <Chevron className="mr-5 ml-1 -rotate-90" />
        </div>
      </div>
      <div className="ml-1 mb-[2px] flex w-[26px] shrink-0 flex-col border border-[#3a3a3a]">
        <GripRow />
        {modifyTools.map((n) => (
          <Tool key={n} name={n} className="min-h-0 w-[23px] flex-1" />
        ))}
        <div className="flex h-[10px] shrink-0 flex-col border-t-2 border-[#3a3a3a]">
          <GripRow />
        </div>
        <Tool name="front" className="min-h-0 w-[23px] flex-1" />
        <Tool name="back" className="min-h-0 w-[23px] flex-1" />
      </div>
    </main>
  );
}

function CommandLine() {
  return (
    <section className="flex h-[56px] shrink-0 font-['Liberation_Mono','Noto_Sans_CJK_SC',monospace] text-xs text-black">
      <div className="flex w-[21px] shrink-0 flex-col items-center bg-[#5c5c5c] pt-4">
        <button type="button" aria-label="close">
          <Icon name="close" className="size-[10px]" />
        </button>
        <button type="button" aria-label="customize" className="mt-2">
          <Icon name="wrench" className="size-4" />
        </button>
      </div>
      <div className="flex min-w-0 flex-1 flex-col">
        <div className="h-[35px] border-b border-[#6a6a6a] bg-[#c8c8c8] pt-[2px] pl-1 leading-4">
          <p>命令: _.erase 找到 1 个</p>
          <p>命令: LINE</p>
        </div>
        <div className="flex flex-1 items-center bg-white">
          <span className="w-5" />
          <Icon name="down" className="size-3 opacity-60 brightness-50" />
          <label className="flex flex-1 items-center gap-[6px] pl-[5px]">
            <b>LINE</b> 指定第一个点:
            <input aria-label="command" className="flex-1 outline-none" />
          </label>
        </div>
      </div>
    </section>
  );
}

const trapezoid = '[clip-path:polygon(0_0,100%_0,calc(100%-10px)_100%,10px_100%)]';

function LayoutTabs() {
  return (
    <div className="flex h-[22px] shrink-0 items-start gap-[2px] bg-[#383838] pl-2 text-xs leading-[19px]">
      <button type="button" className={`h-[18px] w-[51px] bg-linear-to-b from-[#888] to-[#b5b5b5] font-bold text-white ${trapezoid}`}>
        模型
      </button>
      <button type="button" className={`h-[18px] w-[52px] bg-[#5a5a5a] pr-2 text-[#aaa] ${trapezoid}`}>
        布局1
      </button>
      <button type="button" className={`h-[18px] w-[52px] bg-[#5a5a5a] pr-2 text-[#aaa] ${trapezoid}`}>
        布局2
      </button>
      <button type="button" aria-label="new layout" className="flex h-4 w-6 items-center justify-center rounded-br-lg bg-[#4c4c4c]">
        <Icon name="newTab" className="size-2" />
      </button>
    </div>
  );
}

function Cell({ list = '', className = '', children }: { list?: string; className?: string; children?: ReactNode }) {
  return (
    <div className={`flex shrink-0 items-center border-l-2 border-[#707070] ${className}`}>
      {children}
      {list
        .split(' ')
        .filter(Boolean)
        .map((n, i) =>
          n === 'v' ? (
            <button key={i} type="button" aria-label="options" className="flex w-[14px] shrink-0 justify-center">
              <Icon name="down" className="size-[14px]" />
            </button>
          ) : (
            <Tool key={i} name={n} className="w-6" />
          ),
        )}
    </div>
  );
}

function StatusBar() {
  return (
    <footer className="flex h-[26px] shrink-0 overflow-hidden bg-[#383838] pl-[65px] text-xs text-white">
      <div className="flex flex-1 border-t-2 border-[#707070] bg-[#4a4a4a]">
        <Cell className="w-[182px] justify-end pr-[5px] font-['Roboto',sans-serif]">2348.2744, 508.7361, 0.0000</Cell>
        <Cell className="w-8 justify-center font-bold">模型</Cell>
        <Cell list="gridOn snapDots v" className="w-[66px]" />
        <Cell list="infer" className="w-[26px]" />
        <Cell list="dynIn" className="w-[25px]" />
        <Cell list="ortho polar v iso v" className="w-[102px]" />
        <Cell list="otrack osnap v" className="w-16" />
        <Cell list="lwt" className="w-[25px]" />
        <Cell list="trans" className="w-6" />
        <Cell list="cycling" className="w-[25px]" />
        <Cell list="osnap3d v" className="w-[42px]" />
        <Cell list="ducs filter v gizmo v" className="w-[105px]" />
        <Cell list="annoOn annoOn annoOff" className="w-[145px]">
          <span className="order-last flex items-center pl-1 font-['Roboto',sans-serif] whitespace-nowrap">
            1:1 / 100%
            <Icon name="down" className="size-[14px]" />
          </span>
        </Cell>
        <Cell list="gear v" className="w-[42px]" />
        <Cell list="plus" className="w-[26px]" />
        <Cell list="units" className="w-[100px]">
          <span className="order-last flex flex-1 items-center justify-between pl-1 font-bold">
            小数
            <Icon name="down" className="size-[14px]" />
          </span>
        </Cell>
        <Cell list="quickProp" className="w-6" />
        <Cell list="lockUi v" className="w-[43px]" />
        <Cell list="isolate" className="w-[26px]" />
        <Cell list="hardware" className="w-8 justify-center" />
        <Cell list="clean custom" className="flex-1" />
      </div>
    </footer>
  );
}

const snapMenu: ([string, string, boolean?] | 'gap' | 'line')[] = [
  ['track', '临时追踪点(K)'],
  ['from', '自(F)'],
  ['', '两点之间的中点(T)'],
  ['', '点过滤器(T)', true],
  'gap',
  ['', '三维对象捕捉(3)', true],
  'line',
  ['endpoint', '端点(E)'],
  ['midpoint', '中点(M)'],
  ['intersect', '交点(I)'],
  ['apparent', '外观交点(A)'],
  ['extension', '延长线(X)'],
  'gap',
  ['centerPt', '圆心(C)'],
  ['geoCenter', '几何中心'],
  ['quadrant', '象限点(Q)'],
  ['tangent', '切点(G)'],
  'gap',
  ['perp', '垂直(P)'],
  ['parallel', '平行线(L)'],
  ['node', '节点(D)'],
  ['insertPt', '插入点(S)'],
  ['nearest', '最近点(R)'],
  ['none', '无(N)'],
  'line',
  ['osettings', '对象捕捉设置(O)...'],
];

function SnapMenu() {
  return (
    <ul className="absolute top-[99px] left-[408px] w-[172px] border border-[#bdbdbd] bg-[#f2f2f2] px-px pt-[2px] text-xs text-black">
      {snapMenu.map((row, i) => {
        if (row === 'gap') return <li key={i} className="h-[5px]" />;
        if (row === 'line') {
          return (
            <li key={i} className="flex h-1 items-center pl-[26px]">
              <span className="h-px flex-1 bg-[#d0d0d0]" />
            </li>
          );
        }
        const [icon, text, sub] = row;
        return (
          <li key={i}>
            <button
              type="button"
              className={`flex h-5 w-full items-center gap-[9px] pr-[5px] pl-[2px] text-left ${icon === 'tangent' ? 'bg-[#91c9f7]' : ''}`}
            >
              <Icon name={icon} />
              {text}
              {sub && <Chevron className="ml-auto -rotate-90" />}
            </button>
          </li>
        );
      })}
    </ul>
  );
}

function DynamicInput() {
  return (
    <div className="absolute top-[561px] left-[424px] flex items-start gap-1 text-xs text-black">
      <span className="h-[22px] w-[91px] bg-[#9a9a9a] pl-1 leading-[21px]">指定第一个点:</span>
      <span className="flex h-[19px] w-[75px] items-center bg-white px-[3px]">
        <input
          aria-label="x"
          defaultValue="2348.2744"
          className="h-[15px] w-[61px] bg-[#0078d7] text-white outline-none"
        />
      </span>
      <input aria-label="y" defaultValue="508.7361" className="h-[19px] w-[67px] bg-[#9a9a9a] pl-[3px] outline-none" />
    </div>
  );
}

function Watermark() {
  return (
    <div className="absolute top-[585px] left-[967px] flex h-[115px] w-[235px] items-center gap-4 bg-[#222f55] pl-[14px] text-[#d3d7de]">
      <svg viewBox="0 0 48 50" fill="none" className="h-[50px] w-12 shrink-0" aria-hidden="true">
        <path
          d="M15.500 38.500c-2.500 0-4-1-4-4V7.500c0-5 3.500-6.500 8.500-4L40 15c7 5 7 11 0 17L17 46.500c-7 3-14-1-14-8V11"
          stroke="currentColor"
          strokeWidth="4"
          strokeLinecap="round"
        />
        <path d="M18 18l10 6.500L18 31z" fill="currentColor" />
        <path d="M31 20v9" stroke="currentColor" strokeWidth="2" />
      </svg>
      <div>
        <p className="text-4xl leading-10 font-bold">溜溜自学</p>
        <p className="mt-1 font-['DejaVu_Sans',sans-serif] text-[17px] leading-4">zixue.3D66.COM</p>
      </div>
    </div>
  );
}

export default function App() {
  return (
    <div className="relative flex h-screen min-h-[600px] flex-col overflow-hidden border-2 border-[#bcbcbc] bg-[#5c5c5c] font-['Noto_Sans','Noto_Sans_CJK_SC',sans-serif]">
      <Header />
      <FileTabs />
      <Toolbars />
      <Workspace />
      <CommandLine />
      <LayoutTabs />
      <StatusBar />
      <div className="absolute -top-[2px] -left-[2px]">
        <SnapMenu />
        <DynamicInput />
        <Watermark />
      </div>
    </div>
  );
}
